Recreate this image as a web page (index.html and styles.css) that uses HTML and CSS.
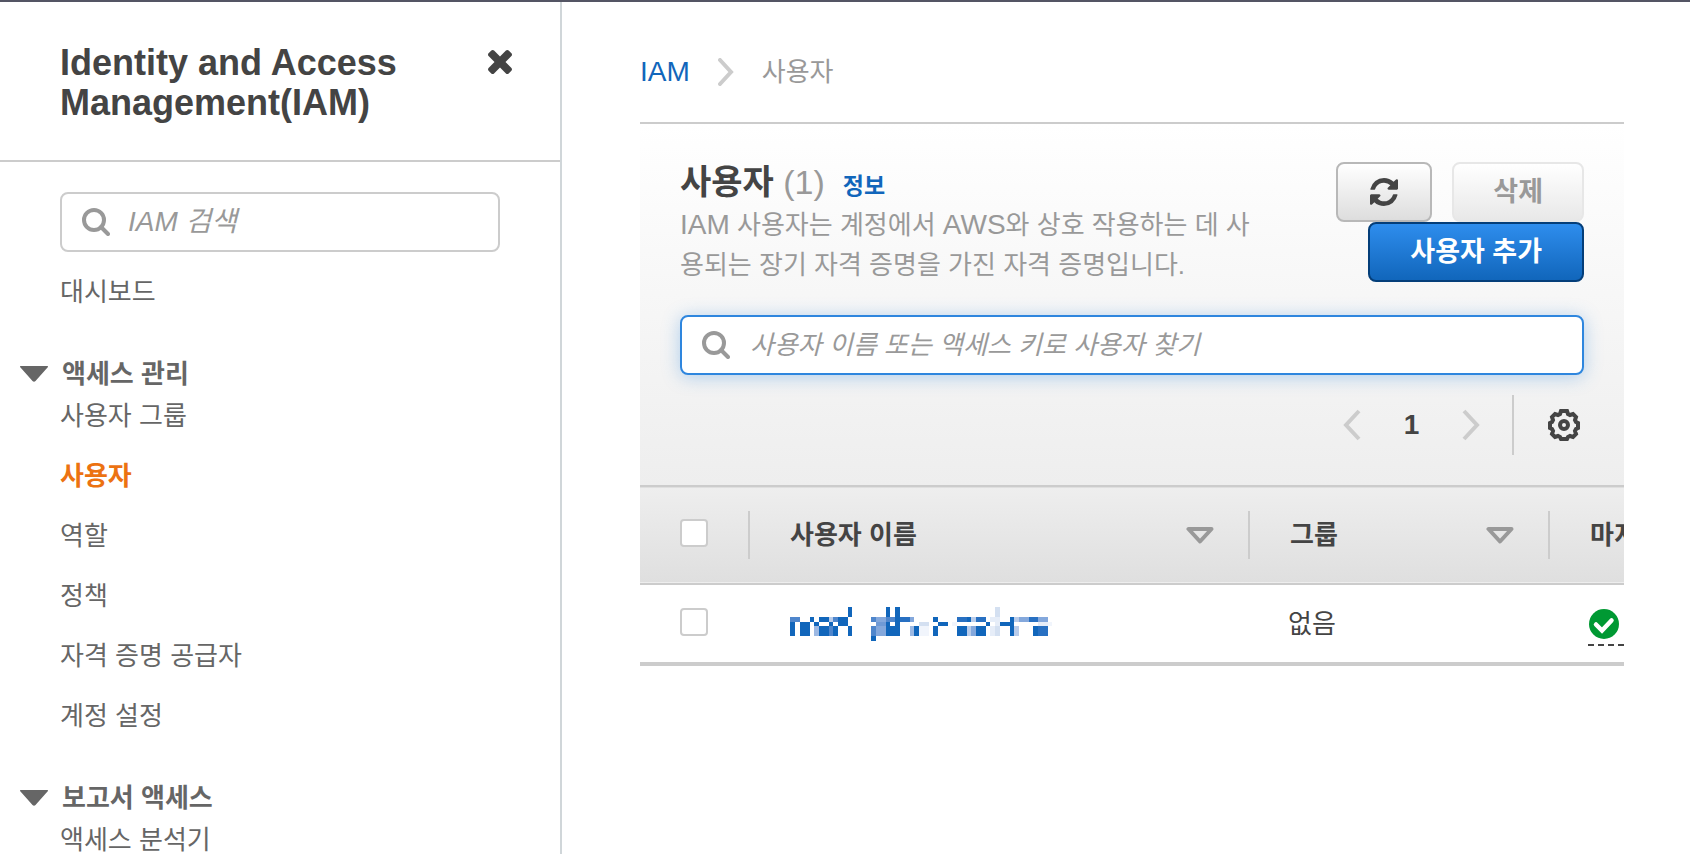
FILE: index.html
```html
<!DOCTYPE html>
<html lang="ko">
<head>
<meta charset="utf-8">
<title>IAM 사용자</title>
<link rel="stylesheet" href="styles.css">
</head>
<body>
<svg class="sprite" aria-hidden="true">
  <symbol id="search" viewBox="0 0 28 28"><circle cx="12" cy="12" r="10" fill="none" stroke="currentColor" stroke-width="4"/><path d="M19 19l7 7" stroke="currentColor" stroke-width="4" stroke-linecap="round"/></symbol>
  <symbol id="sort" viewBox="0 0 28 17"><path d="M2.500 2h23L14 14.500z" fill="none" stroke="currentColor" stroke-width="4" stroke-linejoin="round"/></symbol>
  <symbol id="caret" viewBox="0 0 28 16"><path d="M1 0h26q2 0 .5 1.600L15.500 15q-1.500 1.600-3 0L.5 1.600Q-1 0 1 0z" fill="currentColor"/></symbol>
</svg>
<div class="app">
  <aside class="sidebar">
    <header class="side-head">
      <h1>Identity and Access Management(IAM)</h1>
      <button class="icon-btn close" aria-label="닫기"><svg width="24" height="24" viewBox="302 366 1188 1188"><path fill="currentColor" d="M1490 1322q0 40-28 68l-136 136q-28 28-68 28t-68-28l-294-294-294 294q-28 28-68 28t-68-28l-136-136q-28-28-28-68t28-68l294-294-294-294q-28-28-28-68t28-68l136-136q28-28 68-28t68 28l294 294 294-294q28-28 68-28t68 28l136 136q28 28 28 68t-28 68l-294 294 294 294q28 28 28 68z"/></svg></button>
    </header>
    <label class="field side-search"><svg width="28" height="28"><use href="#search"/></svg><input class="latin" type="search" placeholder="IAM 검색" aria-label="IAM 검색"></label>
    <nav class="nav">
      <ul class="links"><li><a href="#">대시보드</a></li></ul>
      <section>
        <h2><button class="toggle"><svg width="28" height="16"><use href="#caret"/></svg>액세스 관리</button></h2>
        <ul class="links">
          <li><a href="#">사용자 그룹</a></li>
          <li><a href="#" class="active" aria-current="page">사용자</a></li>
          <li><a href="#">역할</a></li>
          <li><a href="#">정책</a></li>
          <li><a href="#">자격 증명 공급자</a></li>
          <li><a href="#">계정 설정</a></li>
        </ul>
      </section>
      <section>
        <h2><button class="toggle"><svg width="28" height="16"><use href="#caret"/></svg>보고서 액세스</button></h2>
        <ul class="links"><li><a href="#">액세스 분석기</a></li></ul>
      </section>
    </nav>
  </aside>
  <main class="main">
    <nav class="crumbs" aria-label="이동 경로">
      <a href="#" class="latin">IAM</a>
      <svg width="16" height="28" viewBox="0 0 16 28"><path d="M2 2l11 12L2 26" fill="none" stroke="#ccc" stroke-width="4" stroke-linecap="round"/></svg>
      <span>사용자</span>
    </nav>
    <section class="panel">
      <div class="tools">
        <div class="top">
          <div class="intro">
            <h2 class="title">사용자 <span class="count">(1)</span><a href="#" class="info">정보</a></h2>
            <p><span class="latin">IAM</span> 사용자는 계정에서 <span class="latin">AWS</span>와 상호 작용하는 데 사용되는 장기 자격 증명을 가진 자격 증명입니다.</p>
          </div>
          <div class="actions">
            <button class="btn refresh" aria-label="새로 고침"><svg width="28" height="28" viewBox="0 0 1536 1536"><path fill="currentColor" d="M1511 928q0 5-1 7-64 268-268 434.500T764 1536q-146 0-282.500-55T238 1324l-129 129q-19 19-45 19t-45-19-19-45V960q0-26 19-45t45-19h448q26 0 45 19t19 45-19 45l-137 137q71 66 161 102t187 36q134 0 250-65t186-179q11-17 53-117 8-23 30-23h192q13 0 22.500 9.500t9.500 22.500zm25-800v448q0 26-19 45t-45 19h-448q-26 0-45-19t-19-45 19-45l138-138Q969 256 768 256q-134 0-250 65T332 500q-11 17-53 117-8 23-30 23H50q-13 0-22.500-9.500T18 608v-7q65-268 270-434.500T768 0q146 0 284 55.500T1297 212l130-129q19-19 45-19t45 19 19 45z"/></svg></button>
            <button class="btn delete" disabled>삭제</button>
            <button class="btn primary">사용자 추가</button>
          </div>
        </div>
        <label class="field filter"><svg width="28" height="28"><use href="#search"/></svg><input type="search" placeholder="사용자 이름 또는 액세스 키로 사용자 찾기" aria-label="사용자 찾기"></label>
        <div class="pager">
          <button class="icon-btn" aria-label="이전"><svg width="18" height="32" viewBox="0 0 18 32"><path d="M16 2L3 16l13 14" fill="none" stroke="#ccc" stroke-width="4"/></svg></button>
          <span class="page">1</span>
          <button class="icon-btn" aria-label="다음"><svg width="18" height="32" viewBox="0 0 18 32"><path d="M2 2l13 14L2 30" fill="none" stroke="#ccc" stroke-width="4"/></svg></button>
          <button class="icon-btn gear" aria-label="설정"><svg width="32" height="32" viewBox="0 0 32 32" fill="none" stroke="currentColor" stroke-width="4"><path stroke-linejoin="miter" d="M13 2h6l1 3 2 1 3-1 3 3-1 3 1 2 2 1v5l-2 1-1 2 1 3-3 3-3-1-2 1-1 2h-6l-1-2-2-1-3 1-3-3 1-3-1-2-2-1v-5l2-1 1-2-1-3 3-3 3 1 2-1z"/><circle cx="16" cy="16" r="4"/></svg></button>
        </div>
      </div>
      <div class="table-wrap">
        <table>
          <colgroup><col class="c-check"><col class="c-name"><col class="c-group"><col class="c-last"></colgroup>
          <thead><tr>
            <th><input type="checkbox" aria-label="모두 선택"></th>
            <th><div class="th">사용자 이름<svg width="28" height="17"><use href="#sort"/></svg></div></th>
            <th><div class="th">그룹<svg width="28" height="17"><use href="#sort"/></svg></div></th>
            <th><div class="th">마지막 활동</div></th>
          </tr></thead>
          <tbody><tr>
            <td><input type="checkbox" aria-label="사용자 선택"></td>
            <td class="name-cell"><a href="#" class="name" aria-label="사용자"><svg width="262" height="34" viewBox="30 33 786 102" shape-rendering="crispEdges">
              <path fill="#1166bb" d="M204 33h12v30h-12zM318 33h12v30h-12zM345 33h15v45h-15zM90 63h12v15h-12zM117 63h30v15h-30zM174 63h30v27h-30zM459 63h15v15h-15zM561 63h12v15h-12zM690 63h12v57h-12zM30 78h15v42h-15zM60 78h30v42h-30zM102 78h15v12h-15zM147 78h12v12h-12zM318 78h12v12h-12zM345 78h15v12h-15zM474 78h30v12h-30zM618 78h12v12h-12zM660 78h30v12h-30zM117 90h30v30h-30zM159 90h15v30h-15zM204 90h12v30h-12zM318 90h42v30h-42zM402 90h15v30h-15zM459 90h15v30h-15zM531 90h30v30h-30zM588 90h30v30h-30zM759 90h15v30h-15zM273 120h15v15h-15z"/>
              <path fill="#2870c2" d="M360 63h30v15h-30zM531 63h30v15h-30zM588 63h30v15h-30zM747 63h27v15h-27zM774 90h30v30h-30z"/>
              <path fill="#4f86cc" d="M30 63h30v15h-30zM159 63h15v15h-15zM273 63h15v15h-15zM318 63h27v15h-27zM147 90h12v30h-12zM273 90h15v30h-15z"/>
              <path fill="#84a8dc" d="M288 63h30v15h-30zM390 63h12v15h-12zM717 63h30v15h-30zM774 63h30v15h-30zM288 90h30v30h-30zM573 90h15v30h-15z"/>
              <path fill="#6f9ad6" d="M288 78h30v12h-30z"/>
              <path fill="#9db9e3" d="M102 90h15v30h-15zM390 90h12v30h-12z"/>
              <path fill="#b9ccea" d="M147 63h12v15h-12zM573 63h15v15h-15zM702 63h15v15h-15zM561 90h12v30h-12zM702 90h15v30h-15z"/>
              <path fill="#d4e0f1" d="M645 33h15v30h-15zM417 78h30v12h-30zM645 90h15v30h-15z"/>
              <path fill="#e6edf8" d="M630 63h30v15h-30zM645 78h15v12h-15zM774 78h30v12h-30zM630 90h15v30h-15z"/>
              <path fill="#f1f5fc" d="M417 90h30v30h-30zM516 78h15v12h-15zM804 78h12v12h-12z"/>
            </svg></a></td>
            <td>없음</td>
            <td><span class="status"><svg width="30" height="30" viewBox="0 0 30 30"><circle cx="15" cy="15" r="15" fill="#093"/><path d="M7 15.500l6 6L22.500 11.500" fill="none" stroke="#fff" stroke-width="4.500" stroke-linejoin="miter" stroke-linecap="round"/></svg></span></td>
          </tr></tbody>
        </table>
      </div>
    </section>
  </main>
</div>
</body>
</html>
```

FILE: styles.css
```css
* { box-sizing: border-box; }
html { height: 100%; }
body {
  margin: 0;
  height: 100%;
  overflow: hidden;
  background: #fff;
  color: #444;
  font: 26px/40px "Liberation Sans", "Noto Sans CJK KR", sans-serif;
}
h1, h2, p, ul { margin: 0; padding: 0; }
ul { list-style: none; }
a { color: #1166bb; text-decoration: none; }
svg { display: block; flex: none; }
button, input { font: inherit; color: inherit; }
button { padding: 0; border: 0; background: none; }
.sprite { position: absolute; width: 0; height: 0; }
.latin { font-size: 28px; line-height: 28px; }

.app { display: flex; height: 100%; border-top: 2px solid #545564; }
.sidebar {
  flex: none;
  width: 562px;
  overflow: hidden;
  border-right: 2px solid #d0d6d9;
}
.side-head {
  display: flex;
  justify-content: space-between;
  align-items: flex-start;
  gap: 20px;
  height: 160px;
  padding: 41px 48px 0 60px;
  border-bottom: 2px solid #ccc;
}
.side-head h1 { font-size: 36px; line-height: 40px; }
.close { padding-top: 7px; }

.field {
  display: flex;
  align-items: center;
  gap: 20px;
  height: 60px;
  padding: 0 20px;
  border: 2px solid #ccc;
  border-radius: 8px;
  background: #fff;
  color: #999;
}
.field input {
  flex: 1;
  min-width: 0;
  padding: 0;
  border: 0;
  outline: 0;
  background: none;
  font-style: italic;
  line-height: 40px;
}
.field input::placeholder { color: #999; opacity: 1; }
.side-search { gap: 18px; margin: 30px 60px 20px; }

.nav { display: flex; flex-direction: column; gap: 42px; }
.nav section { display: flex; flex-direction: column; gap: 2px; }
.nav h2 { font-size: 26px; line-height: 40px; }
.toggle { display: flex; align-items: center; gap: 14px; padding-left: 20px; color: #666; font-weight: bold; }
.links { display: flex; flex-direction: column; gap: 20px; padding-left: 60px; }
.links li { height: 40px; }
.links a { color: #666; }
.links .active { color: #ec7211; font-weight: bold; }

.main { flex: 1; min-width: 0; padding: 50px 66px 0 78px; }
.crumbs { display: flex; align-items: center; gap: 28px; height: 40px; color: #999; }

.panel { margin-top: 30px; border-top: 2px solid #ccc; }
.tools { padding: 38px 40px 30px; background: linear-gradient(#fff, #eee); }
.top { display: flex; justify-content: space-between; height: 120px; }
.intro { width: 584px; }
.title { display: flex; align-items: baseline; height: 43px; font-size: 34px; line-height: 40px; white-space: pre; }
.count { color: #999; font-size: 34px; font-weight: normal; }
.info { margin-left: 18px; font-size: 23px; }
.intro p { color: #999; }
.actions {
  display: flex;
  flex-wrap: wrap;
  justify-content: flex-end;
  align-content: flex-start;
  column-gap: 20px;
  width: 260px;
}
.btn {
  height: 60px;
  padding: 0 40px;
  border: 2px solid #b8b8b8;
  border-radius: 8px;
  background: linear-gradient(#fff, #ddd);
  font-size: 27px;
  font-weight: bold;
}
.refresh { padding: 0 32px; }
.delete { padding: 0 39px; }
.btn:disabled { border-color: #e7e7e7; background: linear-gradient(#fff, #e8e8e8); color: #999; }
.primary { border-color: #043e79; background: linear-gradient(#2e8ded, #1166bb); color: #fff; }

.filter { margin-top: 33px; border-color: #2e86de; box-shadow: 0 2px 18px rgba(46, 134, 222, .35); }
.pager { display: flex; align-items: center; justify-content: flex-end; margin-top: 20px; height: 60px; }
.page { width: 101px; text-align: center; font-size: 28px; font-weight: bold; }
.gear { margin-left: 32px; padding: 14px 4px 14px 34px; border-left: 2px solid #ccc; }

.table-wrap { overflow: hidden; border-bottom: 4px solid #ccc; }
table { width: 1200px; table-layout: fixed; border-collapse: collapse; }
.c-check { width: 108px; }
.c-name { width: 500px; }
.c-group { width: 300px; }
thead tr { border-top: 2px solid #ccc; border-bottom: 2px solid #ccc; background: linear-gradient(#eee, #dfdfdf); }
th, td { padding: 0; text-align: left; }
th { height: 98px; }
td { height: 78px; padding-left: 40px; }
.name-cell { padding-left: 42px; }
.th {
  display: flex;
  align-items: center;
  justify-content: space-between;
  height: 48px;
  padding: 0 34px 0 40px;
  border-left: 2px solid #ccc;
}
.th svg { color: #999; }
input[type="checkbox"] {
  display: block;
  width: 28px;
  height: 28px;
  margin: 0 0 4px;
  appearance: none;
  border: 2px solid #ccc;
  border-radius: 4px;
  background: #fff;
}
th input[type="checkbox"] { margin-left: 40px; }
.name { display: block; }
.status {
  display: block;
  width: 120px;
  height: 44px;
  padding: 7px 0 0 1px;
  background: repeating-linear-gradient(90deg, #444 0 6px, transparent 6px 10px) bottom / 100% 2px no-repeat;
}
```
